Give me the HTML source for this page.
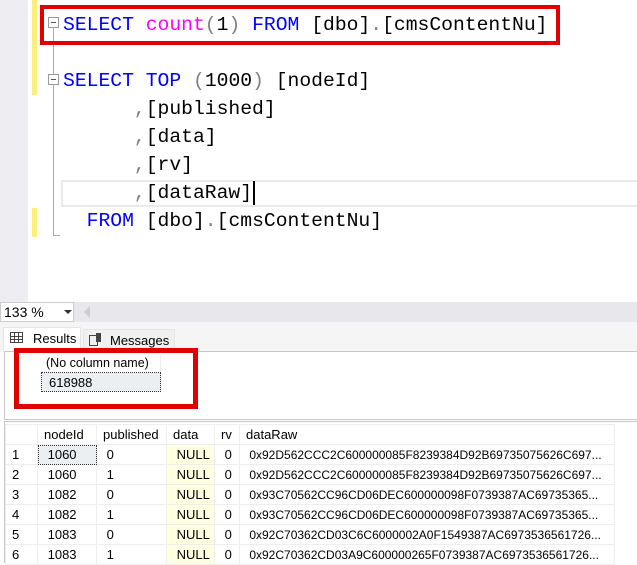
<!DOCTYPE html>
<html><head><meta charset="utf-8"><style>
*{margin:0;padding:0;box-sizing:border-box}
body{width:637px;height:563px;overflow:hidden;background:#fff;position:relative;font-family:"Liberation Sans",Arial,sans-serif}
.a{position:absolute}
.code{position:absolute;left:63px;font-family:"Liberation Mono",monospace;font-size:19.7px;line-height:28px;white-space:pre;color:#000}
.k{color:#0000ff}.f{color:#ff00ff}.g{color:#808080}
.fold{position:absolute;width:11px;height:11px;border:1px solid #999;background:#fff;left:48px}
.fold:after{content:"";position:absolute;left:2px;top:4px;width:5px;height:1px;background:#555}
table{border-collapse:collapse;font-size:13px;color:#000}
td{height:20px;padding:0 0 0 6px;border:1px solid #eee;white-space:nowrap}
td.r{font-size:12px}
</style></head><body>
<div class="a" style="left:0;top:0;width:28px;height:302px;background:#eeeef2"></div>
<div class="a" style="left:32px;top:0;width:5px;height:95px;background:#fcf07a"></div>
<div class="a" style="left:32px;top:208px;width:5px;height:29px;background:#fcf07a"></div>
<div class="a" style="left:53px;top:28px;width:1px;height:208px;background:#aaa"></div>
<div class="a" style="left:53px;top:235px;width:7px;height:1px;background:#aaa"></div>
<div class="a" style="left:61px;top:180px;width:576px;height:27px;border:2px solid #eaeaea;border-right:none"></div>
<div class="fold" style="top:17px"></div>
<div class="fold" style="top:74px"></div>
<div class="code" style="top:11px"><span class="k">SELECT</span> <span class="f">count</span><span class="g">(</span>1<span class="g">)</span> <span class="k">FROM</span> [dbo]<span class="g">.</span>[cmsContentNu]</div>
<div class="code" style="top:67px"><span class="k">SELECT</span> <span class="k">TOP</span> <span class="g">(</span>1000<span class="g">)</span> [nodeId]
      <span class="g">,</span>[published]
      <span class="g">,</span>[data]
      <span class="g">,</span>[rv]
      <span class="g">,</span>[dataRaw]
  <span class="k">FROM</span> [dbo]<span class="g">.</span>[cmsContentNu]</div>
<div class="a" style="left:253px;top:181px;width:2px;height:24px;background:#000"></div>
<div class="a" style="left:40px;top:5px;width:520px;height:40px;border:4px solid #e00000"></div>

<div class="a" style="left:0;top:302px;width:637px;height:20px;background:#e8e8ec"></div>
<div class="a" style="left:0;top:302px;width:74px;height:20px;background:#fff;border:1px solid #ccc;font-size:14px;padding:1px 3px">133 %</div>
<div class="a" style="left:64px;top:310px;width:0;height:0;border-left:4px solid transparent;border-right:4px solid transparent;border-top:4px solid #333"></div>
<div class="a" style="left:84px;top:306px;width:0;height:0;border-top:6px solid transparent;border-bottom:6px solid transparent;border-right:6px solid #ccc"></div>
<div class="a" style="left:0;top:322px;width:637px;height:30px;background:#f5f5f5"></div>
<div class="a" style="left:3px;top:327px;width:78px;height:24px;background:#fff;border:1px solid #e5e5e5;border-bottom:none;font-size:13px;padding:3px 0 0 29px">Results</div>
<div class="a" style="left:10px;top:332px;width:13px;height:11px;border:1px solid #444;background:linear-gradient(#444,#444) 0 3px/100% 1px no-repeat,linear-gradient(#444,#444) 0 6px/100% 1px no-repeat,linear-gradient(90deg,#444,#444) 3px 0/1px 100% no-repeat,linear-gradient(90deg,#444,#444) 7px 0/1px 100% no-repeat"></div>
<div class="a" style="left:83px;top:329px;width:92px;height:22px;background:#f0f0f0;border:1px solid #e5e5e5;border-bottom:none;font-size:13px;padding:3px 0 0 26px">Messages</div>
<div class="a" style="left:89px;top:335px;width:9px;height:11px;border:1px solid #444"></div>
<div class="a" style="left:96px;top:333px;width:5px;height:9px;background:#444"></div>

<div class="a" style="left:4px;top:351px;width:640px;height:69px;border:1px solid #c8c8c8;background:#fff"></div>
<div class="a" style="left:41px;top:355px;width:120px;height:17px;font-size:12.5px;padding:1px 0 0 5px;border-right:1px solid #eee">(No column name)</div>
<div class="a" style="left:41px;top:372px;width:120px;height:20px;font-size:13px;padding:2px 0 0 7px;background:#eceff2;border:1px dotted #333">618988</div>
<div class="a" style="left:14px;top:348px;width:184px;height:61px;border:5px solid #e00000"></div>

<div class="a" style="left:4px;top:421px;width:640px;height:142px;border:1px solid #c8c8c8;border-bottom:none;background:#fff"></div>
<table class="a" style="left:5px;top:424px">
<tr style="height:19px"><td style="width:32px"></td><td style="width:59px">nodeId</td><td style="width:70px">published</td><td style="width:48px">data</td><td style="width:25px">rv</td><td style="width:375px">dataRaw</td></tr>
<tr><td>1</td><td style="background:#eceff2;outline:1px dotted #333;outline-offset:-1px">&nbsp;1060</td><td>&nbsp;0</td><td style="background:#ffffe1">&nbsp;NULL</td><td>&nbsp;0</td><td class="r">&nbsp;0x92D562CCC2C600000085F8239384D92B69735075626C697...</td></tr>
<tr><td>2</td><td>&nbsp;1060</td><td>&nbsp;1</td><td style="background:#ffffe1">&nbsp;NULL</td><td>&nbsp;0</td><td class="r">&nbsp;0x92D562CCC2C600000085F8239384D92B69735075626C697...</td></tr>
<tr><td>3</td><td>&nbsp;1082</td><td>&nbsp;0</td><td style="background:#ffffe1">&nbsp;NULL</td><td>&nbsp;0</td><td class="r">&nbsp;0x93C70562CC96CD06DEC600000098F0739387AC69735365...</td></tr>
<tr><td>4</td><td>&nbsp;1082</td><td>&nbsp;1</td><td style="background:#ffffe1">&nbsp;NULL</td><td>&nbsp;0</td><td class="r">&nbsp;0x93C70562CC96CD06DEC600000098F0739387AC69735365...</td></tr>
<tr><td>5</td><td>&nbsp;1083</td><td>&nbsp;0</td><td style="background:#ffffe1">&nbsp;NULL</td><td>&nbsp;0</td><td class="r">&nbsp;0x92C70362CD03C6C6000002A0F1549387AC6973536561726...</td></tr>
<tr><td>6</td><td>&nbsp;1083</td><td>&nbsp;1</td><td style="background:#ffffe1">&nbsp;NULL</td><td>&nbsp;0</td><td class="r">&nbsp;0x92C70362CD03A9C600000265F0739387AC6973536561726...</td></tr>
</table>
</body></html>
